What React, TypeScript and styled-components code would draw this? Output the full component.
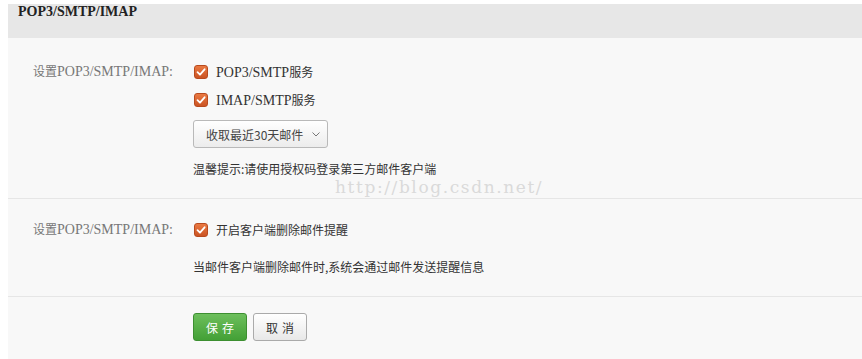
import React from 'react';
import styled, {createGlobalStyle} from 'styled-components';

const GlobalStyle = createGlobalStyle`
    body {
        margin: 0;
        background: #ffffff;
        font-family: "Liberation Serif", "Noto Sans CJK SC", serif;
    }
`;

const Panel = styled.div`
    position: relative;
    margin: 4px 0 0 8px;
    width: 854px;
    height: 355px;
    background: #f8f8f8;
`;

const Header = styled.h2`
    margin: 0;
    height: 34px;
    line-height: 34px;
    padding-left: 10px;
    background: #e7e7e7;
    font: bold 14px "Liberation Serif", "Noto Sans CJK SC", serif;
    color: #222;
`;

const Section = styled.div<{ $top: number; $bottom: number }>`
    padding: ${p => p.$top}px 0 ${p => p.$bottom}px;
    border-bottom: 1px solid #e6e6e6;
`;

const Row = styled.div`
    display: grid;
    grid-template-columns: 185px 1fr;
`;

const Label = styled.div`
    padding-left: 25px;
    height: 28px;
    line-height: 28px;
    font-size: 12px;
    color: #777;
`;

const En = styled.span`
    font-size: 14px;
`;

const Controls = styled.div`
    display: flex;
    flex-direction: column;
    align-items: flex-start;
`;

const CheckRow = styled.label`
    display: flex;
    align-items: center;
    gap: 8px;
    height: 28px;
    padding-left: 1px;
    font-size: 12px;
    color: #333;
`;

const Box = styled.span`
    display: flex;
    align-items: center;
    justify-content: center;
    width: 14px;
    height: 14px;
    box-sizing: border-box;
    border: 1px solid #b84a1e;
    border-radius: 3px;
    background: linear-gradient(#ea7942, #cb5424);
    svg {
        width: 10px;
        height: 10px;
    }
`;

const Select = styled.button`
    display: flex;
    align-items: center;
    gap: 9px;
    margin-top: 6px;
    width: 135px;
    height: 28px;
    padding: 0 0 0 12px;
    border: 1px solid #b9b9b9;
    border-radius: 3px;
    background: linear-gradient(#ffffff, #ececec);
    font: 12px "Noto Sans CJK SC", sans-serif;
    color: #444;
    svg {
        width: 8px;
        height: 5px;
    }
`;

const Note = styled.p<{ $gap: number }>`
    margin: ${p => p.$gap}px 0 0;
    height: 16px;
    line-height: 16px;
    font: 12px "Noto Sans CJK SC", sans-serif;
    color: #333;
`;

const Footer = styled.div`
    display: grid;
    grid-template-columns: 185px 1fr;
    padding-top: 16px;
`;

const Buttons = styled.div`
    display: flex;
    gap: 6px;
`;

const Button = styled.button<{ $primary?: boolean }>`
    width: 54px;
    height: 28px;
    padding: 0;
    border-radius: 3px;
    font: 12px "Noto Sans CJK SC", sans-serif;
    letter-spacing: 4px;
    text-indent: 4px;
    border: 1px solid ${p => (p.$primary ? '#3d8f31' : '#aaaaaa')};
    color: ${p => (p.$primary ? '#ffffff' : '#333333')};
    background: ${p => (p.$primary
        ? 'linear-gradient(#6dbf5c, #43a036)'
        : 'linear-gradient(#ffffff, #e8e8e8)')};
`;

const Watermark = styled.div`
    position: absolute;
    left: 327px;
    top: 173px;
    font: 17px "DejaVu Serif", serif;
    letter-spacing: 1.6px;
    color: #dadada;
    pointer-events: none;
`;

const Check = () => (
    <Box>
        <svg viewBox="0 0 10 10">
            <path d="M1.5 5.2 L4 7.7 L8.6 2.3" fill="none" stroke="#fff" strokeWidth="1.8"
                  strokeLinecap="round" strokeLinejoin="round"/>
        </svg>
    </Box>
);

const SetLabel = () => (
    <Label>设置<En>POP3/SMTP/IMAP:</En></Label>
);

export default function App() {
    return (
        <>
            <GlobalStyle/>
            <Panel>
                <Header>POP3/SMTP/IMAP</Header>
                <Section $top={20} $bottom={22}>
                    <Row>
                        <SetLabel/>
                        <Controls>
                            <CheckRow><Check/><span><En>POP3/SMTP</En>服务</span></CheckRow>
                            <CheckRow><Check/><span><En>IMAP/SMTP</En>服务</span></CheckRow>
                            <Select>
                                收取最近30天邮件
                                <svg viewBox="0 0 8 5">
                                    <path d="M0.5 0.5 L4 4 L7.5 0.5" fill="none" stroke="#777" strokeWidth="1"/>
                                </svg>
                            </Select>
                            <Note $gap={12}>温馨提示:请使用授权码登录第三方邮件客户端</Note>
                        </Controls>
                    </Row>
                </Section>
                <Section $top={17} $bottom={22}>
                    <Row>
                        <SetLabel/>
                        <Controls>
                            <CheckRow><Check/><span>开启客户端删除邮件提醒</span></CheckRow>
                            <Note $gap={14}>当邮件客户端删除邮件时,系统会通过邮件发送提醒信息</Note>
                        </Controls>
                    </Row>
                </Section>
                <Footer>
                    <div/>
                    <Buttons>
                        <Button $primary>保存</Button>
                        <Button>取消</Button>
                    </Buttons>
                </Footer>
                <Watermark>http://blog.csdn.net/</Watermark>
            </Panel>
        </>
    );
}
